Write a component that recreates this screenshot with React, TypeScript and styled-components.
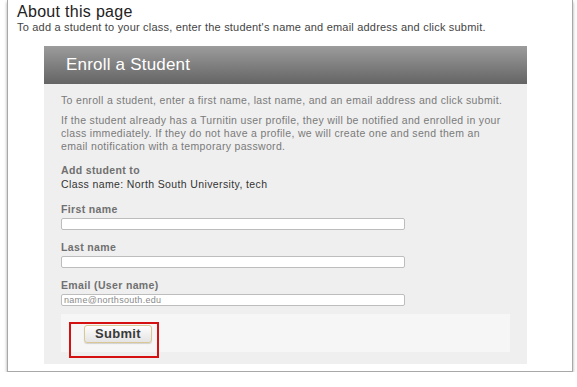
import React from "react";
import styled, { createGlobalStyle } from "styled-components";

const GlobalStyle = createGlobalStyle`
  html, body {
    margin: 0;
    padding: 0;
    background: #fff;
    font-family: "Liberation Sans", Arial, sans-serif;
  }
`;

const Frame = styled.div`
  margin-left: 7px;
  width: 566px;
  height: 372px;
  box-sizing: border-box;
  padding: 3px 8px 0 9px;
  background: #fff;
  border: 1px solid #a8a8a8;
  border-top: none;
  box-shadow: 0 2px 3px rgba(0, 0, 0, 0.35);
`;

const PageTitle = styled.h1`
  margin: 0;
  font-size: 16px;
  letter-spacing: 0.3px;
  line-height: 18px;
  font-weight: normal;
  color: #222;
`;

const PageIntro = styled.p`
  margin: 0;
  font-size: 11px;
  letter-spacing: 0.2px;
  line-height: 13px;
  color: #444;
`;

const Panel = styled.section`
  margin: 12px 0 0 27px;
  width: 483px;
`;

const PanelHeader = styled.div`
  height: 38px;
  display: flex;
  align-items: center;
  padding-left: 22px;
  background: linear-gradient(#9c9c9c, #646464);
  color: #fff;
  font-size: 17px;
  letter-spacing: 0.2px;
`;

const PanelBody = styled.div`
  background: #efefef;
  padding: 10px 17px 12px 17px;
`;

const Para = styled.p<{ $gap?: number }>`
  margin: ${(p) => p.$gap ?? 0}px 0 0;
  max-width: 446px;
  font-size: 10.5px;
  letter-spacing: 0.33px;
  line-height: 13px;
  color: #7a7a7a;
`;

const Label = styled.div<{ $gap?: number }>`
  margin-top: ${(p) => p.$gap ?? 0}px;
  font-size: 10.5px;
  letter-spacing: 0.35px;
  line-height: 13px;
  font-weight: bold;
  color: #707070;
`;

const ClassName = styled.div`
  margin-top: 1px;
  font-size: 10.5px;
  letter-spacing: 0.38px;
  line-height: 13px;
  color: #333;
`;

const Field = styled.input`
  display: block;
  margin-top: 2px;
  width: 344px;
  height: 12px;
  box-sizing: border-box;
  padding: 0 2px;
  border: 1px solid #bdbdbd;
  border-radius: 2px;
  background: #fff;
  font-family: "Liberation Sans", Arial, sans-serif;
  font-size: 9px;
  letter-spacing: 0.3px;
  color: #888;
  outline: none;
  &::placeholder {
    color: #8a8a8a;
  }
`;

const ActionArea = styled.div`
  position: relative;
  margin-top: 8px;
  height: 38px;
  box-sizing: border-box;
  padding: 10px 0 0 23px;
  background: #f6f6f6;
`;

const SubmitButton = styled.button`
  width: 68px;
  height: 18px;
  padding: 0;
  border: 1px solid #d9c896;
  border-radius: 3px;
  background: linear-gradient(#fdfdfd, #e4e4e4);
  box-shadow: 0 1px 1px rgba(0, 0, 0, 0.15);
  font-family: "Liberation Sans", Arial, sans-serif;
  font-size: 13px;
  letter-spacing: 0.3px;
  font-weight: bold;
  color: #3a3a3a;
`;

const Highlight = styled.div`
  position: absolute;
  left: 8px;
  top: 8px;
  width: 90px;
  height: 36px;
  box-sizing: border-box;
  border: 2px solid #d41010;
  pointer-events: none;
`;

export default function App() {
  return (
    <>
      <GlobalStyle />
      <Frame>
        <PageTitle>About this page</PageTitle>
        <PageIntro>
          To add a student to your class, enter the student's name and email
          address and click submit.
        </PageIntro>
        <Panel>
          <PanelHeader>Enroll a Student</PanelHeader>
          <PanelBody>
            <Para>
              To enroll a student, enter a first name, last name, and an email
              address and click submit.
            </Para>
            <Para $gap={7}>
              If the student already has a Turnitin user profile, they will be
              notified and enrolled in your class immediately. If they do not
              have a profile, we will create one and send them an email
              notification with a temporary password.
            </Para>
            <Label $gap={11}>Add student to</Label>
            <ClassName>Class name: North South University, tech</ClassName>
            <Label $gap={12}>First name</Label>
            <Field type="text" />
            <Label $gap={11}>Last name</Label>
            <Field type="text" />
            <Label $gap={11}>Email (User name)</Label>
            <Field type="text" placeholder="name@northsouth.edu" />
            <ActionArea>
              <SubmitButton type="button">Submit</SubmitButton>
              <Highlight />
            </ActionArea>
          </PanelBody>
        </Panel>
      </Frame>
    </>
  );
}
